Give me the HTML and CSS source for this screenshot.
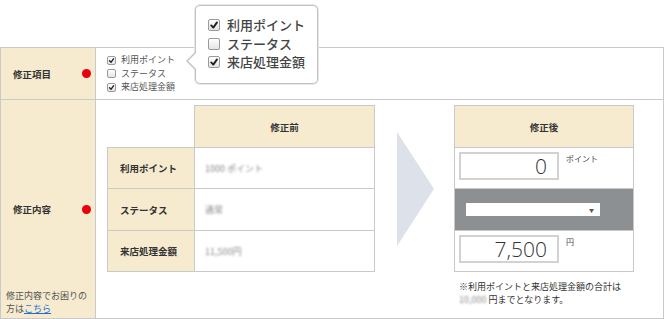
FILE: index.html
```html
<!DOCTYPE html>
<html lang="ja">
<head>
<meta charset="utf-8">
<title>修正</title>
<link rel="stylesheet" href="styles.css">
</head>
<body>
<div class="page">
  <div class="form">
    <div class="label row1">
      <div class="label-head"><span>修正項目</span><span class="dot"></span></div>
    </div>
    <div class="field row1 checks-cell">
      <ul class="checks">
        <li><span class="cb"><svg viewBox="0 0 10 10"><path d="M2.2 5.4 L4.3 7.6 L8 2.4"/></svg></span>利用ポイント</li>
        <li><span class="cb"></span>ステータス</li>
        <li><span class="cb"><svg viewBox="0 0 10 10"><path d="M2.2 5.4 L4.3 7.6 L8 2.4"/></svg></span>来店処理金額</li>
      </ul>
    </div>
    <div class="label row2">
      <div></div>
      <div class="label-head"><span>修正内容</span><span class="dot"></span></div>
      <p class="help">修正内容でお困りの<br>方は<a href="#">こちら</a></p>
    </div>
    <div class="field content">
      <table class="before">
        <colgroup><col class="c1"><col class="c2"></colgroup>
        <tr class="h42"><td class="empty"></td><th>修正前</th></tr>
        <tr class="h41"><th class="rowlabel">利用ポイント</th><td class="val"><span class="blur">1000 ポイント</span></td></tr>
        <tr class="h42"><th class="rowlabel">ステータス</th><td class="val"><span class="blur">通常</span></td></tr>
        <tr class="h41"><th class="rowlabel">来店処理金額</th><td class="val"><span class="blur">11,500円</span></td></tr>
      </table>
      <svg class="arrow" viewBox="0 0 37 114"><polygon points="0,0 37,57 0,114"/></svg>
      <div class="after-wrap">
        <table class="after">
          <tr class="h42"><th>修正後</th></tr>
          <tr class="h41"><td class="inp-cell"><span class="inp">0</span><span class="unit">ポイント</span></td></tr>
          <tr class="h42"><td class="sel-cell"><span class="sel"><span class="tri">▼</span></span></td></tr>
          <tr class="h41"><td class="inp-cell"><span class="inp">7,500</span><span class="unit">円</span></td></tr>
        </table>
        <p class="note">※利用ポイントと来店処理金額の合計は<br><span class="blur">10,000</span> 円までとなります。</p>
      </div>
    </div>
  </div>
  <div class="popover">
    <ul class="pop-checks">
      <li><span class="cb big"><svg viewBox="0 0 10 10"><path d="M2.2 5.4 L4.3 7.6 L8 2.4"/></svg></span>利用ポイント</li>
      <li><span class="cb big"></span>ステータス</li>
      <li><span class="cb big"><svg viewBox="0 0 10 10"><path d="M2.2 5.4 L4.3 7.6 L8 2.4"/></svg></span>来店処理金額</li>
    </ul>
  </div>
</div>
</body>
</html>
```

FILE: styles.css
```css
* { box-sizing: border-box; margin: 0; padding: 0; }
html, body { width: 664px; height: 319px; overflow: hidden; background: #fff; }
body {
  font-family: "Noto Sans CJK JP", "Noto Sans", sans-serif;
  color: #333;
}
.page { position: relative; padding-top: 47px; }

.form {
  display: grid;
  grid-template-columns: 95px 1fr;
  grid-template-rows: 52px 218px;
  border: 1px solid #c9c9c9;
  width: 664px;
}
.label { background: #f6ebcf; border-right: 1px solid #c9c9c9; }
.row1 { border-bottom: 1px solid #c9c9c9; }
.label.row1 { display: flex; align-items: center; }
.label-head {
  display: flex;
  align-items: center;
  justify-content: space-between;
  width: 100%;
  padding: 0 4px 0 12px;
  font-size: 9.5px;
  font-weight: bold;
  color: #333;
}
.dot { width: 9px; height: 9px; border-radius: 50%; background: #e8000b; }
.label.row2 {
  display: grid;
  grid-template-rows: 1fr auto 1fr;
}
.help {
  align-self: end;
  padding: 0 0 3px 5px;
  font-size: 9px;
  line-height: 13px;
  color: #555;
}
.help a { color: #1a6fd6; text-decoration: underline; }

.checks-cell { display: flex; align-items: center; padding-left: 11px; }
.checks { list-style: none; font-size: 9px; line-height: 13.5px; color: #555; }
.checks li { display: flex; align-items: center; }
.cb {
  display: inline-flex;
  align-items: center;
  justify-content: center;
  width: 9px;
  height: 9px;
  border: 1px solid #9a9a9a;
  border-radius: 2px;
  background: linear-gradient(#ffffff, #e4e4e4);
  margin-right: 5px;
  flex: none;
}
.cb svg { width: 100%; height: 100%; }
.cb path { fill: none; stroke: #222; stroke-width: 1.9; stroke-linecap: round; stroke-linejoin: round; }

.content {
  display: flex;
  align-items: flex-start;
  padding: 5px 0 0 11px;
}
table { border-collapse: collapse; table-layout: fixed; }
.before { width: 267px; }
.before col.c1 { width: 87px; }
.before col.c2 { width: 180px; }
.before td, .before th, .after td, .after th { border: 1px solid #c9c9c9; padding: 0; }
.before .empty { border: none; }
.h42 { height: 42px; }
.h41 { height: 41px; }
.before th, .after th {
  background: #f6ebcf;
  font-size: 9.5px;
  font-weight: bold;
  color: #333;
}
.before th.rowlabel { text-align: left; padding-left: 12px; }
.val { padding-left: 10px !important; font-size: 9px; }
.blur { display: inline-block; color: #8a8a8a; filter: blur(0.8px); }

.arrow { width: 37px; height: 114px; margin: 27px 0 0 22px; flex: none; }
.arrow polygon { fill: #dde1ea; }

.after-wrap { margin-left: 20px; width: 180px; }
.after { width: 180px; }
.inp-cell { vertical-align: top; padding: 4px 0 0 4px !important; }
.inp {
  display: inline-block;
  width: 100px;
  height: 28px;
  border: 2px solid #d2d2d2;
  font-family: "Open Sans", "Noto Sans", sans-serif;
  font-weight: 300;
  font-size: 21px;
  line-height: 24px;
  text-align: right;
  padding-right: 10px;
  color: #333;
  vertical-align: top;
}
.unit { display: inline-block; font-size: 8px; margin: 1px 0 0 7px; vertical-align: top; color: #444; }
.sel-cell { background: #8d9092; padding-left: 11px !important; }
.sel {
  display: flex;
  justify-content: flex-end;
  align-items: center;
  width: 134px;
  height: 13px;
  background: #fff;
  padding-right: 6px;
}
.tri { font-size: 5px; color: #555; }
.note { font-size: 9px; line-height: 13px; padding: 8px 0 0 5px; color: #333; white-space: nowrap; }

.popover {
  position: absolute;
  left: 195px;
  top: 5px;
  width: 123px;
  height: 79px;
  background: #fff;
  border: 1px solid #c2c2c2;
  border-radius: 5px;
  box-shadow: 0 0 0 1px #e8e8e8;
  padding: 10px 0 0 12px;
}
.popover::before {
  content: "";
  position: absolute;
  left: -10px;
  top: 46px;
  border-right: 9px solid #c2c2c2;
  border-top: 9px solid transparent;
  border-bottom: 9px solid transparent;
}
.popover::after {
  content: "";
  position: absolute;
  left: -8px;
  top: 47px;
  border-right: 8px solid #fff;
  border-top: 8px solid transparent;
  border-bottom: 8px solid transparent;
}
.pop-checks { list-style: none; font-size: 13px; line-height: 18.5px; font-weight: 500; color: #444; }
.pop-checks li { display: flex; align-items: center; }
.cb.big { width: 12px; height: 12px; margin-right: 7px; }
```
